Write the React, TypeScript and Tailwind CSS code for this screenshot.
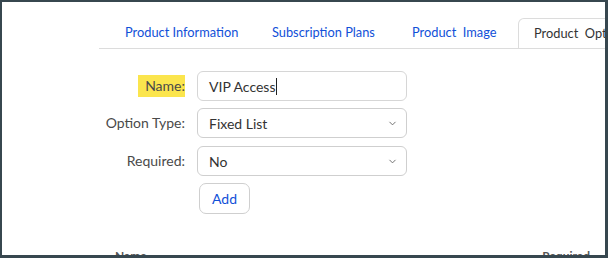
import { ChevronDown } from "lucide-react";

const tabs = [
  { label: "Product Information", width: "w-[147px]", active: false },
  { label: "Subscription Plans", width: "w-[140px]", active: false },
  { label: "Product\u00a0 Image", width: "w-[122px]", active: false },
  { label: "Product\u00a0 Options", width: "", active: true },
];

// Label + field row
const Row = ({ label, highlight = false, className = "", children }) => {
  return (
    <div className={`flex h-[30px] items-center ${className}`}>
      <div className="flex w-[183px] shrink-0 justify-end">
        <span
          className={`text-[14px] leading-[22px] text-[#4a4a4a] ${
            highlight ? "bg-[#fbe54d] pl-[7px]" : ""
          }`}
        >
          {label}
        </span>
      </div>
      <div className="ml-[12px] w-[210px]">{children}</div>
    </div>
  );
};

const Select = ({ value }) => {
  return (
    <div className="flex h-[30px] items-center justify-between rounded-[6px] border border-[#cfcfcf] bg-white pl-[11px] pr-[8px] text-[14px] text-[#333]">
      <span>{value}</span>
      <ChevronDown className="h-[11px] w-[11px] text-[#666]" strokeWidth={2} />
    </div>
  );
};

export default function App() {
  return (
    <div
      className="h-[258px] w-[608px] overflow-hidden border-b-[3px] border-l-2 border-r-[3px] border-t-2 border-[#37474f] bg-white"
      style={{ fontFamily: "Lato, 'Open Sans', sans-serif" }}
    >
      {/* Tabs */}
      <div className="ml-[97px] mt-[17px] flex h-[30px] items-end border-b border-[#dcdcdc] pl-[10px] whitespace-nowrap">
        {tabs.map((tab) => (
          <div
            key={tab.label}
            className={`flex h-[30px] shrink-0 items-center px-4 text-[12.8px] ${tab.width} ${
              tab.active
                ? "rounded-t-[6px] border border-b-0 border-[#dcdcdc] px-[15px] text-[#333]"
                : "text-[#1150d8]"
            }`}
          >
            {tab.label}
          </div>
        ))}
      </div>

      {/* Form */}
      <div className="mt-[22px] flex flex-col">
        <Row label="Name:" highlight>
          <div className="flex h-[30px] items-center rounded-[6px] border border-[#d6d6d6] bg-white pl-[11px] text-[14px] text-[#333]">
            VIP Access
            <span className="ml-px inline-block h-[17px] w-px bg-[#222]" />
          </div>
        </Row>
        <Row label="Option Type:" className="mt-[7px]">
          <Select value="Fixed List" />
        </Row>
        <Row label="Required:" className="mt-[8px]">
          <Select value="No" />
        </Row>
        <div className="ml-[195px] mt-[7px] flex">
          <button className="ml-[2px] h-[31px] w-[51px] rounded-[7px] border border-[#cfcfcf] bg-white text-[14px] text-[#1150d8]">
            Add
          </button>
        </div>
      </div>

      {/* Table header */}
      <div className="mt-[35px] flex justify-between text-[12px] font-bold leading-[14px] text-[#555]">
        <span className="ml-[113px]">Name</span>
        <span className="mr-[15px]">Required</span>
      </div>
    </div>
  );
}
